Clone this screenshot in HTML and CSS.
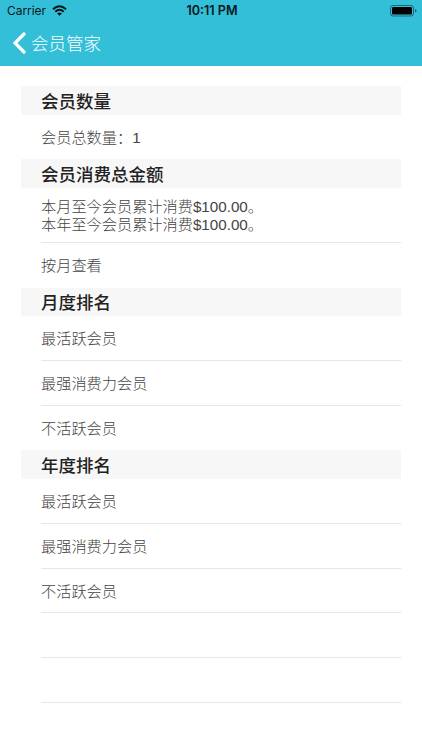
FILE: index.html
```html
<!DOCTYPE html>
<html lang="zh-CN">
<head>
<meta charset="utf-8">
<title>会员管家</title>
<link rel="stylesheet" href="styles.css">
</head>
<body>
<header class="top">
  <div class="status">
    <div class="carrier"><span>Carrier</span>
      <svg width="15" height="11" viewBox="0 0 15 11"><g fill="none" stroke="#0b181b" stroke-width="2"><path d="M1 4.2Q7.5-1.8 14 4.2"/><path d="M3.3 6.7Q7.5 2.8 11.7 6.7"/></g><path d="M5.2 8.4Q7.5 6.6 9.8 8.4L7.5 10.8Z"/></svg>
    </div>
    <div class="time">10:11 PM</div>
    <svg class="battery" width="27" height="12" viewBox="0 0 27 12"><rect x=".5" y=".5" width="23" height="10.5" rx="2.5" fill="none" stroke="#000" stroke-opacity=".45"/><rect x="2" y="2" width="20" height="7.5" rx="1.2"/><path d="M25 4q1.5.4 1.5 1.8T25 7.6z" fill-opacity=".5"/></svg>
  </div>
  <nav class="nav">
    <svg width="13" height="22" viewBox="0 0 13 22"><path d="M11 2L2 11l9 9" fill="none" stroke="#fff" stroke-width="3.2" stroke-linecap="round"/></svg>
    <span>会员管家</span>
  </nav>
</header>
<main class="list">
  <h2>会员数量</h2>
  <div class="row last">会员总数量：1</div>
  <h2>会员消费总金额</h2>
  <div class="row double">本月至今会员累计消费$100.00。<br>本年至今会员累计消费$100.00。</div>
  <div class="row last">按月查看</div>
  <h2>月度排名</h2>
  <div class="row">最活跃会员</div>
  <div class="row">最强消费力会员</div>
  <div class="row last">不活跃会员</div>
  <h2>年度排名</h2>
  <div class="row">最活跃会员</div>
  <div class="row">最强消费力会员</div>
  <div class="row">不活跃会员</div>
  <div class="row"></div>
  <div class="row"></div>
</main>
</body>
</html>
```
FILE: styles.css
```css
* { box-sizing: border-box; }
body { margin: 0; height: 750px; background: #fff; font-family: "Liberation Sans", "Noto Sans CJK SC", sans-serif; overflow: hidden; }
.top { height: 66px; background: #34bfd8; }
.status { height: 22px; padding: 0 5px 0 7px; display: grid; grid-template-columns: 1fr auto 1fr; align-items: center; font: 12px/22px Inter, sans-serif; color: #0b181b; }
.carrier { display: flex; align-items: center; gap: 6px; }
.carrier span { width: 39px; letter-spacing: -.05px; }
.carrier svg { margin-top: -1px; }
.time { font-weight: 600; font-size: 12.6px; }
.battery { justify-self: end; }
.nav { height: 44px; padding: 0 0 2px 13px; display: flex; align-items: center; gap: 5px; color: #fff; font-size: 17.5px; font-weight: 300; }
.nav span { margin-top: -2px; }
.list { padding: 20px 21px 0 21px; }
h2 { margin: 0; height: 28.5px; padding: 1.5px 0 0 20px; background: #f7f7f7; color: #222; font-size: 17.5px; line-height: 28.5px; font-weight: 500; }
.row { height: 44.8px; margin-left: 20px; padding-top: 1px; border-bottom: 1px solid #e6e6e6; font-size: 15.2px; line-height: 44.6px; color: #444; font-weight: 300; }
.row.last { border-bottom-color: transparent; }
.row.double { height: 55px; padding-top: 10px; line-height: 18px; }
```
